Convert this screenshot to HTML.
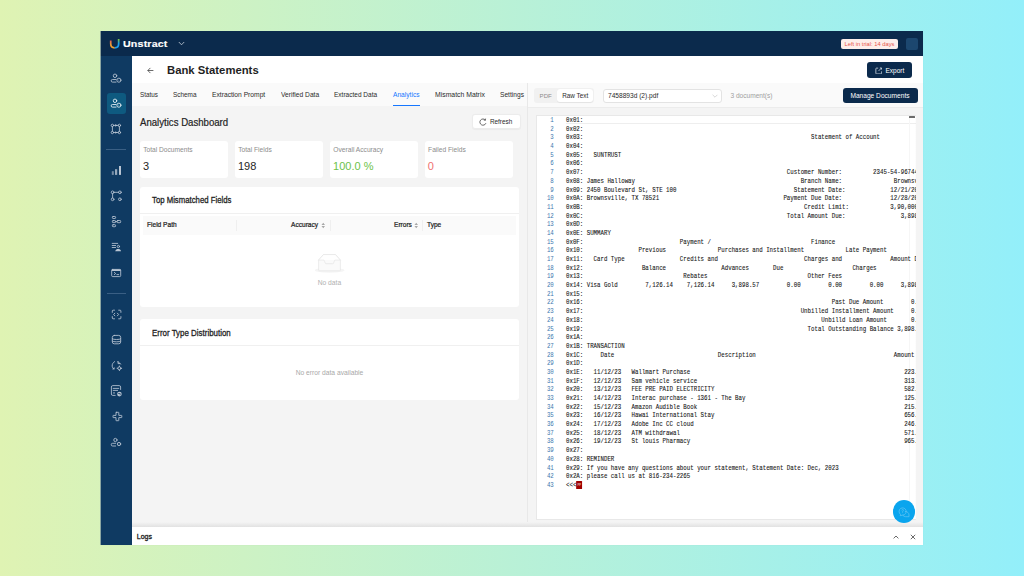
<!DOCTYPE html>
<html><head><meta charset="utf-8">
<style>
*{margin:0;padding:0;box-sizing:border-box}
html,body{width:1024px;height:576px;overflow:hidden}
body{background:linear-gradient(90deg,#dff3b3 0%,#93effa 100%);font-family:"Liberation Sans",sans-serif;position:relative;color:#1f1f1f}
.abs{position:absolute;white-space:nowrap}
#win{position:absolute;left:100px;top:31px;width:823px;height:514px;background:#f4f4f4;overflow:hidden;clip-path:inset(0 0 0 .6px)}
#shadow{position:absolute;left:100.6px;top:31px;width:822.4px;height:514px;box-shadow:0 .5px 1.5px rgba(0,0,0,.04)}
#hdr{position:absolute;left:0;top:0;width:823px;height:25px;background:#0b2a4c}
#side{position:absolute;left:0;top:25px;width:32px;height:489px;background:#0f3a62}
#title{position:absolute;left:32px;top:25px;width:791px;height:26.5px;background:#fff}
#tabs{position:absolute;left:32px;top:51.5px;width:395px;height:23.2px;background:#fafafa}
#rtool{position:absolute;left:428px;top:51.5px;width:395px;height:25px;background:#fafafa;border-bottom:1px solid #ececec}
#divider{position:absolute;left:427px;top:51.5px;width:1px;height:443px;background:#e8e8e8}
.tab{position:absolute;top:1.6px;height:23px;line-height:23px;font-size:7.1px;color:#2b2b2b;transform-origin:0 50%}
.card{position:absolute;background:#fff;border-radius:3px}
.lbl{font-size:6.65px;color:#8c8c8c}
.val{font-size:11px;color:#262626}
.th{position:absolute;top:-1.2px;line-height:19px;font-size:7px;color:#222;-webkit-text-stroke:.22px #222;transform:scaleX(.94);transform-origin:0 0}
.sort{position:absolute;top:6px}
#code{position:absolute;left:436px;top:84px;width:380px;height:404.5px;background:#fff;border:1px solid #e8e8e8;border-right:0;overflow:hidden}
.ln{height:8.7px;line-height:8.7px;white-space:pre;font-family:"Liberation Mono",monospace;font-size:6.8px;position:relative}
.ln .no{position:absolute;left:0;width:16.8px;text-align:right;color:#3a76ad;transform:scaleX(.846);transform-origin:100% 0}
.ln .tx{position:absolute;left:28.7px;color:#141414;-webkit-text-stroke:.09px #141414;transform:scaleX(.846);transform-origin:0 0}
.ff{display:inline-block;width:6.6px;height:8.2px;background:#a00000;vertical-align:top;position:relative;top:.2px;margin-left:.2px;border-radius:.5px;font-style:normal;font-size:3.6px;line-height:9.4px;text-align:center;color:#e0b8b0;-webkit-text-stroke:0;font-family:"Liberation Sans",sans-serif;font-weight:bold}
#logs{position:absolute;left:32px;top:495.5px;width:791px;height:18.5px;background:#fff}
#logsh{position:absolute;left:32px;top:491px;width:791px;height:4.5px;background:linear-gradient(#f4f4f4,#e2e2e2)}
</style></head><body>
<div id="shadow"></div>
<div id="win">
  <div id="hdr">
    <svg class="abs" style="left:9px;top:7.2px" width="11.2" height="11.5" viewBox="0 0 11 11">
      <defs><linearGradient id="gl" x1="0" y1="0" x2="0" y2="1"><stop offset="0" stop-color="#e0605a"/><stop offset=".6" stop-color="#f0a030"/></linearGradient>
      <linearGradient id="gr" x1="0" y1="0" x2="0" y2="1"><stop offset="0" stop-color="#7cc440"/><stop offset=".5" stop-color="#1aa0f0"/></linearGradient></defs>
      <path d="M1.7 2.2 L1.7 5.6 Q1.7 9.6 5.6 9.6" stroke="url(#gl)" stroke-width="1.7" fill="none"/>
      <path d="M9.5 .9 L9.5 5.6 Q9.5 9.6 5.6 9.6" stroke="url(#gr)" stroke-width="1.7" fill="none"/>
    </svg>
    <div class="abs" style="left:23px;top:6.8px;font-size:9.1px;line-height:12px;font-weight:bold;color:#fff;letter-spacing:.15px;transform:scaleX(1.17);transform-origin:0 0;-webkit-text-stroke:.15px #fff">Unstract</div>
    <svg class="abs" style="left:77.6px;top:10px" width="7" height="5" viewBox="0 0 7 5"><path d="M.8 1 L3.5 3.8 L6.2 1" stroke="#c8d2dc" stroke-width=".8" fill="none"/></svg>
    <div class="abs" style="left:741px;top:8px;width:57px;height:10px;background:#fdeeea;border-radius:2px;color:#e8544a;font-size:5.75px;line-height:10.8px;text-align:center">Left in trial: 14 days</div>
    <div class="abs" style="left:805.5px;top:7.2px;width:12.5px;height:11.5px;background:#1c476f;border-radius:2px"></div>
  </div>
  <div id="side">
    <div class="abs" style="left:0;top:0;width:32px;height:1px"></div>
  </div>
  <div class="abs" style="left:6.5px;top:62.2px;width:19.5px;height:21.3px;background:#0e5a80;border-radius:3px"></div>
  <div class="abs" style="left:6.3px;top:118.4px;width:19.6px;height:.7px;background:#3a5f84"></div>
  <div class="abs" style="left:6.5px;top:261.8px;width:19.5px;height:.7px;background:#3a5f84"></div>
  <svg class="abs" style="left:0;top:25px" width="32" height="489" viewBox="100 56 32 489" fill="none" stroke="#b9c5d3" stroke-width=".85" stroke-linecap="round" stroke-linejoin="round"><g stroke="#b9c5d3"><circle cx="115" cy="75.8" r="1.75"/><path d="M116 79.5 H112.5 a1.3 1.3 0 0 0 0 2.6 H116"/><circle cx="118.9" cy="80.2" r="2.05"/><circle cx="118.8" cy="80.1" r=".45" fill="#b9c5d3" stroke="none"/></g>
<g stroke="#eef4f8"><circle cx="115" cy="100.8" r="1.75"/><path d="M116 104.5 H112.5 a1.3 1.3 0 0 0 0 2.6 H116"/><circle cx="118.9" cy="105.2" r="2.05"/><circle cx="118.8" cy="105.1" r=".45" fill="#eef4f8" stroke="none"/></g>
<g><circle cx="112.4" cy="125.4" r="1.2"/><circle cx="119.4" cy="125.4" r="1.2"/><circle cx="112.4" cy="132.5" r="1.2"/><circle cx="119.4" cy="132.5" r="1.2"/><path d="M112.4 126.6V131.3M119.4 126.6V131.3M113.6 125.4H118.2M113.6 132.5H118.2"/><path d="M115.3 124.1L117.3 125.4 115.3 126.7zM115.3 131.2L117.3 132.5 115.3 133.8z" fill="#b9c5d3" stroke="none"/></g>
<g stroke="none"><rect x="111.8" y="171.2" width="2" height="3.7" fill="#b9c5d3" opacity=".6"/><rect x="115" y="169.2" width="2.2" height="5.7" fill="#b9c5d3" opacity=".8"/><rect x="119" y="166" width="2" height="8.9" fill="#b9c5d3"/></g>
<g><circle cx="112.6" cy="192.3" r="1.35"/><circle cx="119.9" cy="192.3" r="1.35"/><circle cx="112.6" cy="199.3" r="1.35"/><circle cx="119.9" cy="199.3" r="1.35"/><path d="M113.95 192.3H118.55M112.6 193.65V197.95"/></g>
<g><rect x="112.4" y="216.5" width="3.2" height="2" rx=".7"/><rect x="112.4" y="220.6" width="3.2" height="2" rx=".7"/><rect x="112.4" y="224.7" width="3.2" height="2" rx=".7"/><rect x="117" y="220.5" width="3.7" height="2.2" rx=".8"/><path d="M115.6 221.6H117"/></g>
<g><path d="M112.2 243.4H117.7M112.2 245.5H115.6M112.2 247.5H115.6"/><circle cx="118.4" cy="246.5" r="1.15"/><path d="M115.2 251.2 C115.6 249.6 116.8 249 118.15 249 S120.7 249.6 121.1 251.2z" fill="#b9c5d3" stroke="none"/></g>
<g><rect x="111.7" y="269.4" width="9" height="7.2" rx="1"/><rect x="111.7" y="269.4" width="9" height="1.6" fill="#b9c5d3" stroke="none"/><path d="M114.3 272.4L115.7 273.5 114.3 274.6M116.9 274.6H118.7"/></g>
<g><path d="M112.3 312.4V311A.8.8 0 0 1 113.1 310.2H114.5M118.7 310.2H120.1A.8.8 0 0 1 120.9 311V312.4M120.9 316.6V318A.8.8 0 0 1 120.1 318.8H118.7M114.5 318.8H113.1A.8.8 0 0 1 112.3 318V316.6"/><path d="M114.8 313.2L113.6 314.5 114.8 315.8M117.4 313.2L118.6 314.5 117.4 315.8"/></g>
<g><rect x="112.3" y="335.4" width="8.4" height="8.4" rx="2"/><path d="M112.3 338.9C113.5 339.8 119.5 339.8 120.7 338.9M112.3 341.2C113.5 342.1 119.5 342.1 120.7 341.2"/></g>
<g><path d="M114.6 361.6C112.9 362.6 112 364.2 112.2 366.2 112.3 367.3 112.8 368.2 113.6 368.9"/><path d="M112.2 369.5L114.6 369.3 114.4 367.1z" fill="#b9c5d3" stroke="none"/><path d="M118 361.6V363.6H120M118 361.6L120.6 364.2"/><circle cx="119.4" cy="368.3" r="1.5"/><path d="M119.4 366V366.6M119.4 370V370.6M117.1 368.3H117.7M121.1 368.3H121.7"/></g>
<g><path d="M120.6 389.5V387A1.4 1.4 0 0 0 119.2 385.6H112.8A1.4 1.4 0 0 0 111.4 387V394A1.4 1.4 0 0 0 112.8 395.4H115.2"/><path d="M113.2 388.4H118.8M113.2 390.4H117.6"/><rect x="113" y="392.2" width="2" height="1.4" fill="#b9c5d3" stroke="none" opacity=".6"/><circle cx="119.4" cy="394.1" r="2.3" fill="#b9c5d3" stroke="none"/><path d="M118.5 393.5H120.2V394.9" stroke="#0f3a62" stroke-width=".7"/></g>
<g><path d="M116.3 412.3H118.5A.3.3 0 0 1 118.8 412.6V415.4H121.5A.3.3 0 0 1 121.8 415.7V417.3A.3.3 0 0 1 121.5 417.6H118.8V420.4A.3.3 0 0 1 118.5 420.7H116.3A.3.3 0 0 1 116 420.4V417.6H113.3A.3.3 0 0 1 113 417.3V415.7A.3.3 0 0 1 113.3 415.4H116V412.6A.3.3 0 0 1 116.3 412.3z"/></g>
<g><circle cx="115.4" cy="440" r="1.65"/><path d="M115.6 443.3H112.6a1.35 1.35 0 0 0 0 2.7 H115.6"/><circle cx="119" cy="444" r="1.7"/><circle cx="119" cy="444" r=".45" fill="#b9c5d3" stroke="none"/></g></svg>
  <div id="title">
    <svg class="abs" style="left:15.4px;top:11.2px" width="7" height="7" viewBox="0 0 7 7"><path d="M6.4 3.5 H.8 M3.4 .9 L.8 3.5 L3.4 6.1" stroke="#3a3a3a" stroke-width=".75" fill="none"/></svg>
    <div class="abs" style="left:35px;top:8.4px;font-size:11.3px;line-height:13px;font-weight:bold;color:#1f1f1f">Bank Statements</div>
    <div class="abs" style="left:735.2px;top:6.1px;width:44.8px;height:15.5px;background:#0b2a4c;border-radius:3px"></div>
    <svg class="abs" style="left:742.6px;top:10.6px" width="7.5" height="7.5" viewBox="0 0 8 8" fill="none" stroke="#dfe6ee" stroke-width=".8"><path d="M3.4 1.2H1.5a.6.6 0 0 0-.6.6v5a.6.6 0 0 0 .6.6h5a.6.6 0 0 0 .6-.6V4.6"/><path d="M3.8 4.2L7 1M5.2 1H7v1.8"/></svg>
    <div class="abs" style="left:753.5px;top:9px;font-size:6.5px;line-height:12px;color:#fff">Export</div>
  </div>
  <div id="tabs">
    <div class="tab" style="left:7.6px;transform:scaleX(0.893)">Status</div>
    <div class="tab" style="left:41px;transform:scaleX(0.904)">Schema</div>
    <div class="tab" style="left:79.9px;transform:scaleX(0.944)">Extraction Prompt</div>
    <div class="tab" style="left:148.8px;transform:scaleX(0.939)">Verified Data</div>
    <div class="tab" style="left:202.4px;transform:scaleX(0.919)">Extracted Data</div>
    <div class="tab" style="left:261.2px;color:#1677ff;transform:scaleX(0.934)">Analytics</div>
    <div class="abs" style="left:261.2px;top:22.4px;width:26.7px;height:1.1px;background:#1677ff"></div>
    <div class="tab" style="left:302.6px;transform:scaleX(0.965)">Mismatch Matrix</div>
    <div class="tab" style="left:368.1px;transform:scaleX(0.934)">Settings</div>
  </div>
  <div id="divider"></div>
  <div id="rtool">
    <div class="abs" style="left:6px;top:5.3px;width:60px;height:15.2px;background:#f1f1f1;border-radius:3px"></div>
    <div class="abs" style="left:11.6px;top:5.3px;line-height:15px;font-size:6.1px;color:#8c8c8c">PDF</div>
    <div class="abs" style="left:29px;top:6.5px;width:36.4px;height:13.3px;background:#fff;border-radius:3px;box-shadow:0 .5px 1px rgba(0,0,0,.06)"></div>
    <div class="abs" style="left:34.2px;top:6.5px;line-height:13.3px;font-size:6.35px;color:#2b2b2b">Raw Text</div>
    <div class="abs" style="left:74.8px;top:6.3px;width:119.5px;height:14.2px;background:#fff;border:.7px solid #e3e3e3;border-radius:3px"></div>
    <div class="abs" style="left:80px;top:6.3px;line-height:14.2px;font-size:6.6px;color:#2b2b2b">7458893d (2).pdf</div>
    <svg class="abs" style="left:183.5px;top:11.4px" width="6" height="4" viewBox="0 0 6 4"><path d="M.6 .8L3 3.2 5.4 .8" stroke="#c0c0c0" stroke-width=".6" fill="none"/></svg>
    <div class="abs" style="left:202.4px;top:6.3px;line-height:14.2px;font-size:6.6px;color:#a0a0a0">3 document(s)</div>
    <div class="abs" style="left:315px;top:5.4px;width:75.1px;height:15.1px;background:#0b2a4c;border-radius:3px"></div>
    <div class="abs" style="left:322.4px;top:5.8px;line-height:15.1px;font-size:6.62px;color:#fff">Manage Documents</div>
  </div>
  <!-- left content -->
  <div class="abs" style="left:39.7px;top:86.3px;font-size:10.4px;line-height:12px;color:#222;-webkit-text-stroke:.2px #222;transform:scaleX(.925);transform-origin:0 0">Analytics Dashboard</div>
  <div class="abs" style="left:372px;top:82.7px;width:48.6px;height:15px;background:#fff;border:.6px solid #ececec;border-radius:3px;box-shadow:0 .5px 1px rgba(0,0,0,.04)"></div>
  <svg class="abs" style="left:379.2px;top:86.6px" width="8" height="8" viewBox="0 0 8 8" fill="none" stroke="#3a3a3a" stroke-width=".75"><path d="M6.3 2A3.1 3.1 0 1 0 6.9 5.2"/><path d="M6.6 .6L6.4 2.3 4.8 2.1" stroke-width=".7"/></svg>
  <div class="abs" style="left:389.9px;top:84.6px;font-size:6.4px;line-height:12px;color:#2b2b2b">Refresh</div>

  <div class="card" style="left:40.1px;top:110.1px;width:87.6px;height:36.8px"><div class="abs lbl" style="left:3.1px;top:4.8px;line-height:8px">Total Documents</div><div class="abs val" style="left:2.8px;top:17.5px;line-height:14px">3</div></div>
  <div class="card" style="left:135.1px;top:110.1px;width:87.9px;height:36.8px"><div class="abs lbl" style="left:3.1px;top:4.8px;line-height:8px">Total Fields</div><div class="abs val" style="left:2.8px;top:17.5px;line-height:14px">198</div></div>
  <div class="card" style="left:230.25px;top:110.1px;width:87.6px;height:36.8px"><div class="abs lbl" style="left:3.1px;top:4.8px;line-height:8px">Overall Accuracy</div><div class="abs val" style="left:2.8px;top:17.5px;line-height:14px;color:#6cc24a">100.0 %</div></div>
  <div class="card" style="left:325px;top:110.1px;width:88px;height:36.8px"><div class="abs lbl" style="left:3.1px;top:4.8px;line-height:8px">Failed Fields</div><div class="abs val" style="left:2.8px;top:17.5px;line-height:14px;color:#f07070">0</div></div>

  <div class="card" style="left:39.9px;top:155.8px;width:379.1px;height:120.7px">
    <div class="abs" style="left:12.2px;top:8.6px;font-size:8.45px;line-height:10px;color:#222;-webkit-text-stroke:.26px #222;transform:scaleX(.92);transform-origin:0 0">Top Mismatched Fields</div>
    <div class="abs" style="left:0;top:26.6px;width:379.1px;height:.7px;background:#f0f0f0"></div>
    <div class="abs" style="left:3px;top:28.9px;width:373.4px;height:19.2px;background:#fafafa">
      <div class="th" style="left:4px">Field Path</div>
      <div class="abs" style="left:93px;top:4px;width:.7px;height:11px;background:#efefef"></div>
      <div class="th" style="left:147.7px">Accuracy</div>
      <svg class="sort" style="left:177.9px" width="4.5" height="7" viewBox="0 0 4.5 7"><path d="M.5 2.9L2.25 .7 4 2.9zM.5 4.1L2.25 6.3 4 4.1z" fill="#a8a8a8"/></svg>
      <div class="abs" style="left:186.8px;top:4px;width:.7px;height:11px;background:#efefef"></div>
      <div class="th" style="left:250.8px">Errors</div>
      <svg class="sort" style="left:271.4px" width="4.5" height="7" viewBox="0 0 4.5 7"><path d="M.5 2.9L2.25 .7 4 2.9zM.5 4.1L2.25 6.3 4 4.1z" fill="#a8a8a8"/></svg>
      <div class="abs" style="left:279.6px;top:4px;width:.7px;height:11px;background:#efefef"></div>
      <div class="th" style="left:284px">Type</div>
    </div>
    <svg class="abs" style="left:175px;top:67px" width="30" height="19" viewBox="0 0 30 19">
      <ellipse cx="14.5" cy="16.3" rx="15" ry="2.5" fill="#f5f5f5"/>
      <path d="M3.6 6.1L8.4 .6H20.4L25.4 6.1V16a.8.8 0 0 1-.8.8H4.4a.8.8 0 0 1-.8-.8z" fill="#fafafa" stroke="#e0e0e0" stroke-width=".6"/>
      <path d="M8.4 .6H20.4L25.4 6.1H3.6z" fill="#fff" stroke="none"/>
      <path d="M3.6 6.1H8.6c.4 0 .7.3.8.6l.8 2.4c.1.4.4.6.8.6h6.8c.4 0 .7-.2.8-.6l.8-2.4c.1-.3.4-.6.8-.6H25.4" fill="none" stroke="#e0e0e0" stroke-width=".6"/>
      <path d="M3.6 6.1L8.4 .6H20.4L25.4 6.1" fill="none" stroke="#e0e0e0" stroke-width=".6"/>
    </svg>
    <div class="abs" style="left:0;top:92.7px;width:379px;text-align:center;font-size:6.7px;line-height:8px;color:#b0b0b0">No data</div>
  </div>

  <div class="card" style="left:40.3px;top:287.7px;width:378.4px;height:81.3px">
    <div class="abs" style="left:11.6px;top:9.4px;font-size:8.45px;line-height:10px;color:#222;-webkit-text-stroke:.26px #222;transform:scaleX(.94);transform-origin:0 0">Error Type Distribution</div>
    <div class="abs" style="left:0;top:26.7px;width:378.4px;height:.7px;background:#f0f0f0"></div>
    <div class="abs" style="left:0;top:50.1px;width:378.4px;text-align:center;font-size:6.7px;line-height:8px;color:#a8a8a8">No error data available</div>
  </div>

  <div id="code">
<div class="abs" style="left:29px;top:7.4px;width:360px;height:.7px;background:#eeeeee"></div>
<div class="abs" style="left:372.2px;top:0;width:.6px;height:404px;background:#f6f6f6"></div>
<div class="abs" style="left:378.2px;top:0;width:1.8px;height:404px;background:linear-gradient(90deg,rgba(0,0,0,0),rgba(0,0,0,.04))"></div>
<div class="ln"><span class="no">1</span><span class="tx">0x01:</span></div>
<div class="ln"><span class="no">2</span><span class="tx">0x02:</span></div>
<div class="ln"><span class="no">3</span><span class="tx">0x03:                                                                  Statement of Account</span></div>
<div class="ln"><span class="no">4</span><span class="tx">0x04:</span></div>
<div class="ln"><span class="no">5</span><span class="tx">0x05:   SUNTRUST</span></div>
<div class="ln"><span class="no">6</span><span class="tx">0x06:</span></div>
<div class="ln"><span class="no">7</span><span class="tx">0x07:                                                           Customer Number:         2345-54-96744</span></div>
<div class="ln"><span class="no">8</span><span class="tx">0x08: James Halloway                                                Branch Name:               Brownsville</span></div>
<div class="ln"><span class="no">9</span><span class="tx">0x09: 2450 Boulevard St, STE 100                                  Statement Date:             12/21/2023</span></div>
<div class="ln"><span class="no">10</span><span class="tx">0x0A: Brownsville, TX 78521                                    Payment Due Date:              12/28/2023</span></div>
<div class="ln"><span class="no">11</span><span class="tx">0x0B:                                                                Credit Limit:            3,90,000.00</span></div>
<div class="ln"><span class="no">12</span><span class="tx">0x0C:                                                           Total Amount Due:                3,898.57</span></div>
<div class="ln"><span class="no">13</span><span class="tx">0x0D:</span></div>
<div class="ln"><span class="no">14</span><span class="tx">0x0E: SUMMARY</span></div>
<div class="ln"><span class="no">15</span><span class="tx">0x0F:                            Payment /                             Finance</span></div>
<div class="ln"><span class="no">16</span><span class="tx">0x10:                Previous               Purchases and Installment            Late Payment</span></div>
<div class="ln"><span class="no">17</span><span class="tx">0x11:   Card Type                Credits and                         Charges and              Amount Due</span></div>
<div class="ln"><span class="no">18</span><span class="tx">0x12:                 Balance                Advances       Due                    Charges</span></div>
<div class="ln"><span class="no">19</span><span class="tx">0x13:                             Rebates                             Other Fees</span></div>
<div class="ln"><span class="no">20</span><span class="tx">0x14: Visa Gold        7,126.14    7,126.14     3,898.57        0.00        0.00        0.00     3,898.57</span></div>
<div class="ln"><span class="no">21</span><span class="tx">0x15:</span></div>
<div class="ln"><span class="no">22</span><span class="tx">0x16:                                                                        Past Due Amount        0.00</span></div>
<div class="ln"><span class="no">23</span><span class="tx">0x17:                                                               Unbilled Installment Amount     0.00</span></div>
<div class="ln"><span class="no">24</span><span class="tx">0x18:                                                                     Unbilld Loan Amount       0.00</span></div>
<div class="ln"><span class="no">25</span><span class="tx">0x19:                                                                 Total Outstanding Balance 3,898.57</span></div>
<div class="ln"><span class="no">26</span><span class="tx">0x1A:</span></div>
<div class="ln"><span class="no">27</span><span class="tx">0x1B: TRANSACTION</span></div>
<div class="ln"><span class="no">28</span><span class="tx">0x1C:     Date                              Description                                        Amount</span></div>
<div class="ln"><span class="no">29</span><span class="tx">0x1D:</span></div>
<div class="ln"><span class="no">30</span><span class="tx">0x1E:   11/12/23   Wallmart Purchase                                                              223.00</span></div>
<div class="ln"><span class="no">31</span><span class="tx">0x1F:   12/12/23   Sam vehicle service                                                            313.00</span></div>
<div class="ln"><span class="no">32</span><span class="tx">0x20:   13/12/23   FEE PRE PAID ELECTRICITY                                                       582.00</span></div>
<div class="ln"><span class="no">33</span><span class="tx">0x21:   14/12/23   Interac purchase - 1361 - The Bay                                              125.00</span></div>
<div class="ln"><span class="no">34</span><span class="tx">0x22:   15/12/23   Amazon Audible Book                                                            215.00</span></div>
<div class="ln"><span class="no">35</span><span class="tx">0x23:   16/12/23   Hawai International Stay                                                       656.00</span></div>
<div class="ln"><span class="no">36</span><span class="tx">0x24:   17/12/23   Adobe Inc CC cloud                                                             246.00</span></div>
<div class="ln"><span class="no">37</span><span class="tx">0x25:   18/12/23   ATM withdrawal                                                                 571.00</span></div>
<div class="ln"><span class="no">38</span><span class="tx">0x26:   19/12/23   St louis Pharmacy                                                              965.00</span></div>
<div class="ln"><span class="no">39</span><span class="tx">0x27:</span></div>
<div class="ln"><span class="no">40</span><span class="tx">0x28: REMINDER</span></div>
<div class="ln"><span class="no">41</span><span class="tx">0x29: If you have any questions about your statement, Statement Date: Dec, 2023</span></div>
<div class="ln"><span class="no">42</span><span class="tx">0x2A: please call us at 816-234-2265</span></div>
<div class="ln"><span class="no">43</span><span class="tx">&lt;&lt;&lt;<i class="ff">FF</i></span></div>
<div class="abs" style="left:372.2px;top:0;width:6px;height:1.5px;background:#6a6a6a;border-radius:.5px"></div>
  </div>
  <div id="logsh"></div>
  <div id="logs"><div class="abs" style="left:4.8px;top:6px;font-size:7px;line-height:8px;color:#222;-webkit-text-stroke:.3px #222">Logs</div>
    <svg class="abs" style="left:761px;top:8px" width="6" height="4" viewBox="0 0 6 4"><path d="M.6 3.4L3 1 5.4 3.4" stroke="#444" stroke-width=".8" fill="none"/></svg>
    <svg class="abs" style="left:777.5px;top:7px" width="6" height="6" viewBox="0 0 6 6"><path d="M.8 .8L5.2 5.2M5.2 .8L.8 5.2" stroke="#444" stroke-width=".8" fill="none"/></svg>
  </div>
  <div class="abs" style="left:792.75px;top:469.4px;width:22.4px;height:22.6px;border-radius:50%;background:#0aa5ee"></div>
  <svg class="abs" style="left:796px;top:473px" width="16" height="16" viewBox="0 0 16 16" fill="none" stroke="#6cc8f2" stroke-width=".65" stroke-linecap="round" stroke-linejoin="round"><path d="M4.2 10.2A3.6 3.6 0 1 1 6.8 11.1L4.6 11.6z"/><path d="M9.3 7.4A3.5 3.5 0 0 1 13 11V12.7H9.6A3.4 3.4 0 0 1 6.9 11.4"/><path d="M5.9 6.2A.8.8 0 1 1 6.9 7C6.7 7.1 6.6 7.3 6.6 7.6M6.6 8.6V8.7" stroke-width=".55"/></svg>
</div>
</body></html>
